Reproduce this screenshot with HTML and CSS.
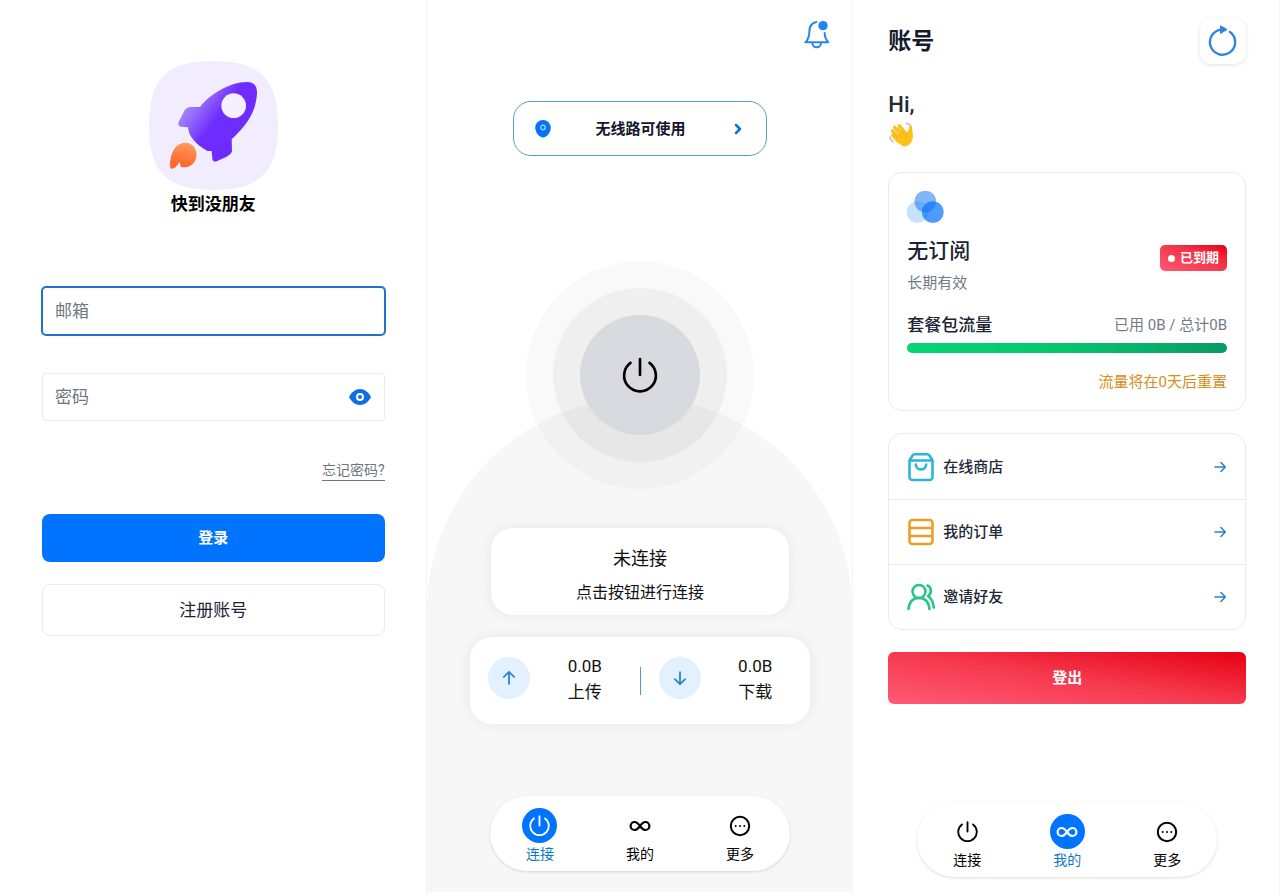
FILE: index.html
```html
<!DOCTYPE html>
<html lang="zh-CN">
<head>
  <meta charset="UTF-8">
  <meta name="viewport" content="width=device-width, initial-scale=1">
  <title>快到没朋友</title>
  <link rel="stylesheet" href="styles.css">
</head>
<body>
  <!-- shared icons -->
  <svg class="sprite" aria-hidden="true">
    <symbol id="icon-power" viewBox="0 0 34 34">
      <path d="M17 2v15M8 5.500a15 15 0 1 0 18 0" fill="none" stroke="currentColor" stroke-linecap="round"/>
    </symbol>
    <symbol id="icon-infinity" viewBox="0 0 22 22">
      <path d="M11 11C9 8.200 7.600 7 5.600 7a4 4 0 0 0 0 8C7.600 15 9 13.800 11 11s3.400-4 5.400-4a4 4 0 0 1 0 8C14.400 15 13 13.800 11 11z" fill="none" stroke="currentColor" stroke-width="2.200"/>
    </symbol>
    <symbol id="icon-more" viewBox="0 0 22 22">
      <circle cx="11" cy="11" r="9.200" fill="none" stroke="currentColor" stroke-width="2"/>
      <circle cx="6.700" cy="11" r="1"/><circle cx="11" cy="11" r="1"/><circle cx="15.300" cy="11" r="1"/>
    </symbol>
    <symbol id="icon-arrow" viewBox="0 0 14 14">
      <path d="M2 7h10M8 2.500L12.300 7 8 11.500" fill="none" stroke="currentColor" stroke-width="1.600" stroke-linecap="round" stroke-linejoin="round"/>
    </symbol>
  </svg>

  <div class="screens">

    <!-- login -->
    <section class="screen login">
      <svg class="logo" viewBox="57 33 387 387" role="img" aria-label="Logo">
        <defs>
          <linearGradient id="rocket" x1="0.05" y1="0.2" x2="0.6" y2="0.6">
            <stop offset="0" stop-color="#b094fb"/>
            <stop offset="0.3" stop-color="#9a74fb"/>
            <stop offset="0.75" stop-color="#6e2cff"/>
          </linearGradient>
          <linearGradient id="flame" x1="0.6" y1="0" x2="0.4" y2="1">
            <stop offset="0" stop-color="#ff9a60"/>
            <stop offset="0.8" stop-color="#fe6a2c"/>
          </linearGradient>
        </defs>
        <path fill="#f1ecfe" d="M250 33C390 33 444 87 444 226S390 420 250 420 57 366 57 226 110 33 250 33z"/>
        <path fill="url(#rocket)" d="M210 171C240 132 300 96 350 96Q382 96 381 130C378 190 345 230 305 268L306 304Q304 312 290 320L260 334Q247 337 247 325L245 303 232 303C200 285 175 260 174 232L152 230Q142 228 146 216L163 182Q170 171 182 171z"/>
        <circle cx="311" cy="167" r="37" fill="#f4f0ff"/>
        <path fill="url(#flame)" d="M121 353C118 325 128 280 165 278 190 278 203 300 199 320 195 345 175 353 153 352L149 335 137 352Q124 360 121 353z"/>
      </svg>
      <h1 class="brand">快到没朋友</h1>

      <form class="login-form" onsubmit="return false">
        <input class="field field-active" type="email" placeholder="邮箱" aria-label="邮箱">
        <div class="field password">
          <input type="password" id="password" placeholder="密码" aria-label="密码">
          <button class="icon-button" type="button" aria-label="显示密码">
            <svg width="24" height="18" viewBox="0 0 24 18">
              <path d="M1 9C3.500 4 7.500 1 12 1s8.500 3 11 8c-2.500 5-6.500 8-11 8S3.500 14 1 9z" fill="#0c6fe8"/>
              <circle cx="12" cy="9" r="3" fill="none" stroke="#fff" stroke-width="2"/>
            </svg>
          </button>
        </div>
        <a class="forgot" href="#">忘记密码?</a>
        <button class="btn btn-login" type="submit">登录</button>
        <button class="btn btn-register" type="button">注册账号</button>
      </form>
    </section>

    <!-- connect -->
    <section class="screen connect">
      <button class="icon-button bell" type="button" aria-label="通知">
        <svg width="28" height="30" viewBox="908 54 84 90">
          <g fill="none" stroke="#2a86e6" stroke-width="6" stroke-linecap="round" stroke-linejoin="round">
            <path d="M948 63C935 66 927 77 927 92 927 108 923 116 915 124H984C977 116 973 110 973 96"/>
            <path d="M936 126C936 143 962 143 962 126"/>
          </g>
          <circle cx="968" cy="74" r="14" fill="#2186f5"/>
        </svg>
      </button>

      <button class="route" type="button">
        <svg width="16" height="18" viewBox="0 0 16 18">
          <path d="M8 0a7.800 7.800 0 0 1 7.800 7.800C15.800 12 12 17.500 8 17.500S.2 12 .2 7.800A7.800 7.800 0 0 1 8 0z" fill="#0673f2"/>
          <circle cx="8" cy="7.500" r="2.300" fill="none" stroke="#a9d2ff" stroke-width="1.300"/>
        </svg>
        <span>无线路可使用</span>
        <svg width="16" height="12" viewBox="0 0 16 12">
          <path d="M6 2l4 4-4 4" fill="none" stroke="#0b76dd" stroke-width="2.500" stroke-linecap="round" stroke-linejoin="round"/>
        </svg>
      </button>

      <div class="ring ring-outer">
        <div class="ring ring-inner">
          <button class="power" type="button" aria-label="连接">
            <svg width="36" height="36" stroke-width="2.500"><use href="#icon-power"/></svg>
          </button>
        </div>
      </div>

      <div class="card status">
        <p class="status-title">未连接</p>
        <p class="status-hint">点击按钮进行连接</p>
      </div>

      <div class="card traffic">
        <div class="traffic-item">
          <span class="traffic-icon up"><svg width="16" height="16"><use href="#icon-arrow"/></svg></span>
          <p>0.0B<br>上传</p>
        </div>
        <div class="divider"></div>
        <div class="traffic-item">
          <span class="traffic-icon down"><svg width="16" height="16"><use href="#icon-arrow"/></svg></span>
          <p>0.0B<br>下载</p>
        </div>
      </div>

      <nav class="tabbar">
        <a class="tab active" href="#">
          <span class="tab-icon"><svg width="21" height="21" stroke-width="3"><use href="#icon-power"/></svg></span>
          连接
        </a>
        <a class="tab" href="#">
          <span class="tab-icon"><svg width="22" height="22"><use href="#icon-infinity"/></svg></span>
          我的
        </a>
        <a class="tab" href="#">
          <span class="tab-icon"><svg width="22" height="22"><use href="#icon-more"/></svg></span>
          更多
        </a>
      </nav>
    </section>

    <!-- account -->
    <section class="screen account">
      <header class="account-header">
        <h2>账号</h2>
        <button class="refresh" type="button" aria-label="刷新">
          <svg width="30" height="32" viewBox="0 0 30 32">
            <path d="M22 7A12.600 12.600 0 1 1 13.500 4.600" fill="none" stroke="#2f86dd" stroke-width="2.400" stroke-linecap="round"/>
            <path d="M12.500.800L19 4.600 12.500 8.400z" fill="#2f86dd" stroke="#2f86dd" stroke-linejoin="round"/>
          </svg>
        </button>
      </header>

      <div class="hello">
        <p>Hi,</p>
        <svg width="26" height="26" viewBox="-1 0 27 27" role="img" aria-label="👋">
          <path d="M18 1.500c3 0 4.500 1.600 5 4M1 15.500c0 2.500 1.300 4 3.500 5" fill="none" stroke="#c9ccd0" stroke-width="2" stroke-linecap="round"/>
          <path d="M7.500 17.500L13 8.500l6.500 2.500 1.500-6c.6-1.600 3-1.200 3 .5l.8 7.500c.4 5-2 11.500-7.500 12.300-4 .5-6.500-2.300-9.800-7.800z" fill="#fcc21b"/>
          <path d="M3.800 13.700L10 20.500M3.500 9.200L12.500 18M6 5.500L15 15M10.700 4L18 12.500" fill="none" stroke="#fcc21b" stroke-width="3.400" stroke-linecap="round"/>
          <path d="M5 12.300l5 5M5.800 8.300l6.500 6.700M9.200 5.800l6.300 6.700M19.500 11c-2 1.500-2.800 3.500-1.800 6" fill="none" stroke="#e9a00f" stroke-width="0.700" stroke-linecap="round"/>
        </svg>
      </div>

      <div class="panel plan">
        <svg class="plan-icon" width="38" height="34" viewBox="0 0 38 34">
          <circle cx="10.500" cy="22" r="10.800" fill="#c7e0fd"/>
          <circle cx="18.300" cy="11.500" r="10.800" fill="#2b83f6" fill-opacity="0.600"/>
          <circle cx="25.800" cy="22" r="10.800" fill="#0a74fb" fill-opacity="0.720"/>
        </svg>
        <div class="plan-row">
          <div>
            <h3>无订阅</h3>
            <p class="muted">长期有效</p>
          </div>
          <span class="badge">已到期</span>
        </div>
        <div class="usage">
          <span class="usage-label">套餐包流量</span>
          <span class="muted">已用 0B / 总计0B</span>
        </div>
        <div class="bar"></div>
        <p class="reset">流量将在0天后重置</p>
      </div>

      <div class="panel links">
        <a href="#">
          <svg width="28" height="30" viewBox="0 0 28 30" fill="none" stroke="#2fb4d9" stroke-width="2.600" stroke-linecap="round" stroke-linejoin="round">
            <path d="M2.500 8.500V25a3 3 0 0 0 3 3h17a3 3 0 0 0 3-3V8.500L22.500 3.500a3 3 0 0 0-2.300-1.200H7.800A3 3 0 0 0 5.500 3.500zM2.500 8.500h23M8.800 12.500c.3 6.500 10.100 6.500 10.400 0"/>
          </svg>
          <span>在线商店</span>
          <svg class="go" width="14" height="14"><use href="#icon-arrow"/></svg>
        </a>
        <a href="#">
          <svg width="28" height="30" viewBox="0 0 28 30" fill="none" stroke="#eb9f26" stroke-width="2.600">
            <rect x="2.500" y="3" width="23" height="24" rx="3"/>
            <path d="M2.500 11h23M2.500 19h23"/>
          </svg>
          <span>我的订单</span>
          <svg class="go" width="14" height="14"><use href="#icon-arrow"/></svg>
        </a>
        <a href="#">
          <svg width="28" height="30" viewBox="0 0 28 30" fill="none" stroke="#2bc487" stroke-width="2.600" stroke-linecap="round" stroke-linejoin="round">
            <circle cx="12" cy="9.500" r="6.500"/>
            <path d="M1.500 27c.8-7 4.500-11 10.500-11s9.700 4 10.500 11M20.500 3.500c4 1.500 4.700 8 .5 10.500 3.200 2 5.200 6 5.800 11.500"/>
          </svg>
          <span>邀请好友</span>
          <svg class="go" width="14" height="14"><use href="#icon-arrow"/></svg>
        </a>
      </div>

      <button class="btn btn-logout" type="button">登出</button>

      <nav class="tabbar">
        <a class="tab" href="#">
          <span class="tab-icon"><svg width="21" height="21" stroke-width="3"><use href="#icon-power"/></svg></span>
          连接
        </a>
        <a class="tab active" href="#">
          <span class="tab-icon"><svg width="22" height="22"><use href="#icon-infinity"/></svg></span>
          我的
        </a>
        <a class="tab" href="#">
          <span class="tab-icon"><svg width="22" height="22"><use href="#icon-more"/></svg></span>
          更多
        </a>
      </nav>
    </section>

  </div>
</body>
</html>
```
FILE: styles.css
```css
* {
  box-sizing: border-box;
}

body {
  margin: 0;
  background: #ffffff;
  color: #111111;
  font-family: Roboto, "Noto Sans CJK SC", sans-serif;
  font-size: 15px;
  line-height: 24px;
}

h1, h2, h3, p {
  margin: 0;
}

a {
  color: inherit;
  text-decoration: none;
}

button, input {
  font-family: inherit;
}

button {
  cursor: pointer;
}

svg {
  display: block;
  flex-shrink: 0;
}

.sprite {
  position: absolute;
  width: 0;
  height: 0;
}

.screens {
  display: grid;
  grid-template-columns: repeat(3, 1fr);
  min-height: 100vh;
}

.screen {
  display: flex;
  flex-direction: column;
  align-items: center;
  border-right: 1px solid #f5f5f5;
}

.icon-button {
  padding: 0;
  border: none;
  background: none;
}

.btn {
  width: 100%;
  padding: 0 0 3px;
  border: none;
  border-radius: 8px;
  font-size: 15px;
  font-weight: bold;
  color: #ffffff;
}

/* login */
.login {
  padding: 61px 41px 0 42px;
}

.logo {
  width: 129px;
  height: 129px;
}

.brand {
  font-size: 17px;
  line-height: 28px;
  color: #000000;
}

.login-form {
  display: flex;
  flex-direction: column;
  width: 100%;
  margin-top: 69px;
}

.field {
  width: 100%;
  height: 48px;
  padding: 0 12px;
  border: 1px solid #ebebeb;
  border-radius: 4px;
  font-size: 17px;
  outline: none;
}

.field-active {
  border-color: #1a74c8;
  box-shadow: 0 0 0 1px #1a74c8;
}

.password {
  display: flex;
  align-items: center;
  margin-top: 38px;
}

.password input {
  flex: 1;
  min-width: 0;
  padding: 0;
  border: none;
  outline: none;
  font-size: 17px;
}

input::placeholder {
  color: #6f757f;
}

.forgot {
  align-self: flex-end;
  margin-top: 39px;
  border-bottom: 1px solid #6f757f;
  font-size: 14px;
  line-height: 20px;
  color: #6f757f;
}

.btn-login {
  height: 48px;
  margin-top: 33px;
  background: #0073ff;
}

.btn-register {
  height: 52px;
  margin-top: 22px;
  border: 1px solid #ebebeb;
  background: #ffffff;
  font-size: 17px;
  font-weight: normal;
  color: #1c2433;
}

/* connect */
.connect {
  position: relative;
  z-index: 0;
  padding: 19px 0 0 1px;
}

/* grey dome behind the controls */
.connect::before {
  content: "";
  position: absolute;
  z-index: -1;
  top: 398px;
  right: 0;
  bottom: 4px;
  left: 0;
  border-radius: 999px 999px 0 0;
  background: #f7f7f7;
}

.bell {
  align-self: flex-end;
  margin-right: 21px;
}

.route {
  display: flex;
  align-items: center;
  justify-content: space-between;
  width: 60%;
  height: 55px;
  margin-top: 52px;
  padding: 0 20px 0 21px;
  border: 1px solid #5b9fc4;
  border-radius: 18px;
  background: #ffffff;
  font-size: 15px;
  font-weight: bold;
  color: #14162c;
}

.route span {
  padding-bottom: 2px;
}

.ring {
  display: flex;
  align-items: center;
  justify-content: center;
  border-radius: 50%;
}

.ring-outer {
  width: 228px;
  height: 228px;
  margin-top: 105px;
  background: rgba(0, 0, 0, 0.024);
}

.ring-inner {
  width: 174px;
  height: 174px;
  background: rgba(0, 0, 0, 0.04);
}

.power {
  display: flex;
  align-items: center;
  justify-content: center;
  width: 120px;
  height: 120px;
  border: none;
  border-radius: 50%;
  background: #d9dae0;
  color: #000000;
}

.card {
  border-radius: 22px;
  background: #ffffff;
  box-shadow: 0 0 14px rgba(0, 0, 0, 0.07);
}

.status {
  width: 70%;
  margin-top: 39px;
  padding: 19px 0 8px;
  text-align: center;
}

.status-title {
  font-size: 18px;
}

.status-hint {
  margin-top: 8px;
  font-size: 16px;
  line-height: 28px;
}

.traffic {
  display: flex;
  align-items: center;
  width: 80%;
  height: 87px;
  margin-top: 22px;
}

.traffic-item {
  display: flex;
  flex: 1;
  align-items: center;
  padding: 0 18px 4px;
}

.traffic-item p {
  flex: 1;
  margin-left: 18px;
  text-align: center;
  font-size: 17px;
  line-height: 26px;
}

.traffic-icon {
  display: flex;
  align-items: center;
  justify-content: center;
  width: 42px;
  height: 42px;
  margin-bottom: 2px;
  border-radius: 50%;
  background: #e3f0fd;
  color: #2a86c8;
}

.up svg {
  transform: rotate(-90deg);
}

.down svg {
  transform: rotate(90deg);
}

.divider {
  width: 1px;
  height: 28px;
  background: #4a9ccb;
}

/* bottom tabs */
.tabbar {
  display: flex;
  width: 300px;
  height: 75px;
  margin-top: 72px;
  padding-top: 12px;
  border-radius: 38px;
  background: #ffffff;
  box-shadow: 0 1px 3px rgba(0, 0, 0, 0.14);
}

.tab {
  display: flex;
  flex: 1;
  flex-direction: column;
  align-items: center;
  font-size: 14px;
  line-height: 22px;
  color: #000000;
}

.tab-icon {
  display: flex;
  align-items: center;
  justify-content: center;
  width: 35px;
  height: 35px;
  border-radius: 50%;
}

.tab.active {
  color: #0d78c4;
}

.tab.active .tab-icon {
  background: #0073ff;
  color: #ffffff;
}

/* account */
.account {
  padding: 18px 33px 0 35px;
}

.account-header {
  display: flex;
  align-items: center;
  justify-content: space-between;
  width: 100%;
}

.account-header h2 {
  padding-top: 2px;
  font-size: 23px;
  line-height: 34px;
  color: #151a2d;
}

.refresh {
  display: flex;
  align-items: center;
  justify-content: center;
  width: 46px;
  height: 46px;
  padding: 0;
  border: none;
  border-radius: 12px;
  background: #ffffff;
  box-shadow: 0 1px 4px rgba(0, 0, 0, 0.12);
}

.hello {
  width: 100%;
  margin-top: 24px;
  font-size: 22px;
  font-weight: 500;
  line-height: 34px;
  color: #1f2937;
}

.panel {
  width: 100%;
  border: 1px solid #ebebeb;
  border-radius: 14px;
  background: #ffffff;
}

.plan {
  margin-top: 24px;
  padding: 17px 18px 16px;
}

.plan-row {
  display: flex;
  align-items: center;
  justify-content: space-between;
  margin-top: 10px;
}

.plan h3 {
  font-size: 21px;
  font-weight: 500;
  line-height: 34px;
  color: #1a2433;
}

.muted {
  font-size: 15px;
  line-height: 30px;
  color: #747a84;
}

.badge {
  display: flex;
  align-items: center;
  gap: 5px;
  height: 26px;
  margin-bottom: 16px;
  padding: 0 8px;
  border-radius: 5px;
  background: linear-gradient(to top right, #ff5a72, #f43249 60%, #e60017);
  font-size: 13px;
  font-weight: bold;
  color: #ffffff;
}

.badge::before {
  content: "";
  width: 7px;
  height: 7px;
  border-radius: 50%;
  background: #ffffff;
}

.usage {
  display: flex;
  align-items: center;
  justify-content: space-between;
  margin-top: 12px;
}

.usage-label {
  font-size: 17px;
  font-weight: 500;
  color: #1a2433;
}

.bar {
  height: 10px;
  margin-top: 3px;
  border-radius: 5px;
  background: linear-gradient(70deg, #06d574, #05c56d 50%, #0b9a64);
}

.reset {
  margin-top: 17px;
  text-align: right;
  font-size: 15px;
  color: #d78d1c;
}

.links {
  margin-top: 22px;
}

.links a {
  display: flex;
  align-items: center;
  gap: 8px;
  height: 65px;
  padding: 0 18px;
  font-size: 15px;
  font-weight: 500;
  color: #1f2937;
}

.links a + a {
  border-top: 1px solid #ebebeb;
}

.go {
  margin-left: auto;
  color: #2d82cc;
}

.btn-logout {
  height: 52px;
  margin-top: 22px;
  border-radius: 6px;
  background: linear-gradient(to top right, #ff5a76, #f6394e 50%, #e60012);
}

.account .tabbar {
  margin-top: 98px;
}
```
